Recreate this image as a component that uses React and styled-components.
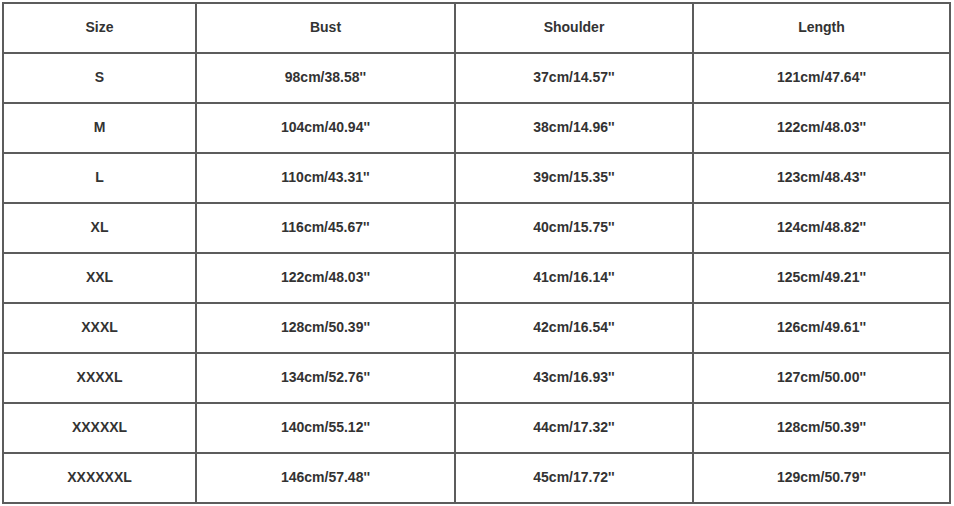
import React from "react";
import styled, { createGlobalStyle } from "styled-components";

const rows = [
  ["S", "98cm/38.58''", "37cm/14.57''", "121cm/47.64''"],
  ["M", "104cm/40.94''", "38cm/14.96''", "122cm/48.03''"],
  ["L", "110cm/43.31''", "39cm/15.35''", "123cm/48.43''"],
  ["XL", "116cm/45.67''", "40cm/15.75''", "124cm/48.82''"],
  ["XXL", "122cm/48.03''", "41cm/16.14''", "125cm/49.21''"],
  ["XXXL", "128cm/50.39''", "42cm/16.54''", "126cm/49.61''"],
  ["XXXXL", "134cm/52.76''", "43cm/16.93''", "127cm/50.00''"],
  ["XXXXXL", "140cm/55.12''", "44cm/17.32''", "128cm/50.39''"],
  ["XXXXXXL", "146cm/57.48''", "45cm/17.72''", "129cm/50.79''"],
];

const columns = [
  { label: "Size", width: 193 },
  { label: "Bust", width: 259 },
  { label: "Shoulder", width: 238 },
  { label: "Length", width: 257 },
];

const GlobalStyle = createGlobalStyle`
  html, body {
    margin: 0;
    background: #ffffff;
  }
  body {
    padding: 2px 0 0 2px;
    font-family: "Liberation Sans", Arial, sans-serif;
  }
`;

const Table = styled.table`
  border-collapse: collapse;
  table-layout: fixed;
  width: 949px;
  color: #333333;
`;

const Cell = styled.td`
  border: 2px solid #5c5c5c;
  height: 50px;
  box-sizing: border-box;
  padding: 0 0 2px;
  text-align: center;
  vertical-align: middle;
  font-size: 14px;
  font-weight: bold;
`;

const HeadCell = styled(Cell).attrs({ as: "th" })``;

export default function App() {
  return (
    <>
      <GlobalStyle />
      <Table>
        <colgroup>
          {columns.map((c) => (
            <col key={c.label} style={{ width: c.width }} />
          ))}
        </colgroup>
        <thead>
          <tr>
            {columns.map((c) => (
              <HeadCell key={c.label}>{c.label}</HeadCell>
            ))}
          </tr>
        </thead>
        <tbody>
          {rows.map((row) => (
            <tr key={row[0]}>
              {row.map((value, i) => (
                <Cell key={i}>{value}</Cell>
              ))}
            </tr>
          ))}
        </tbody>
      </Table>
    </>
  );
}
